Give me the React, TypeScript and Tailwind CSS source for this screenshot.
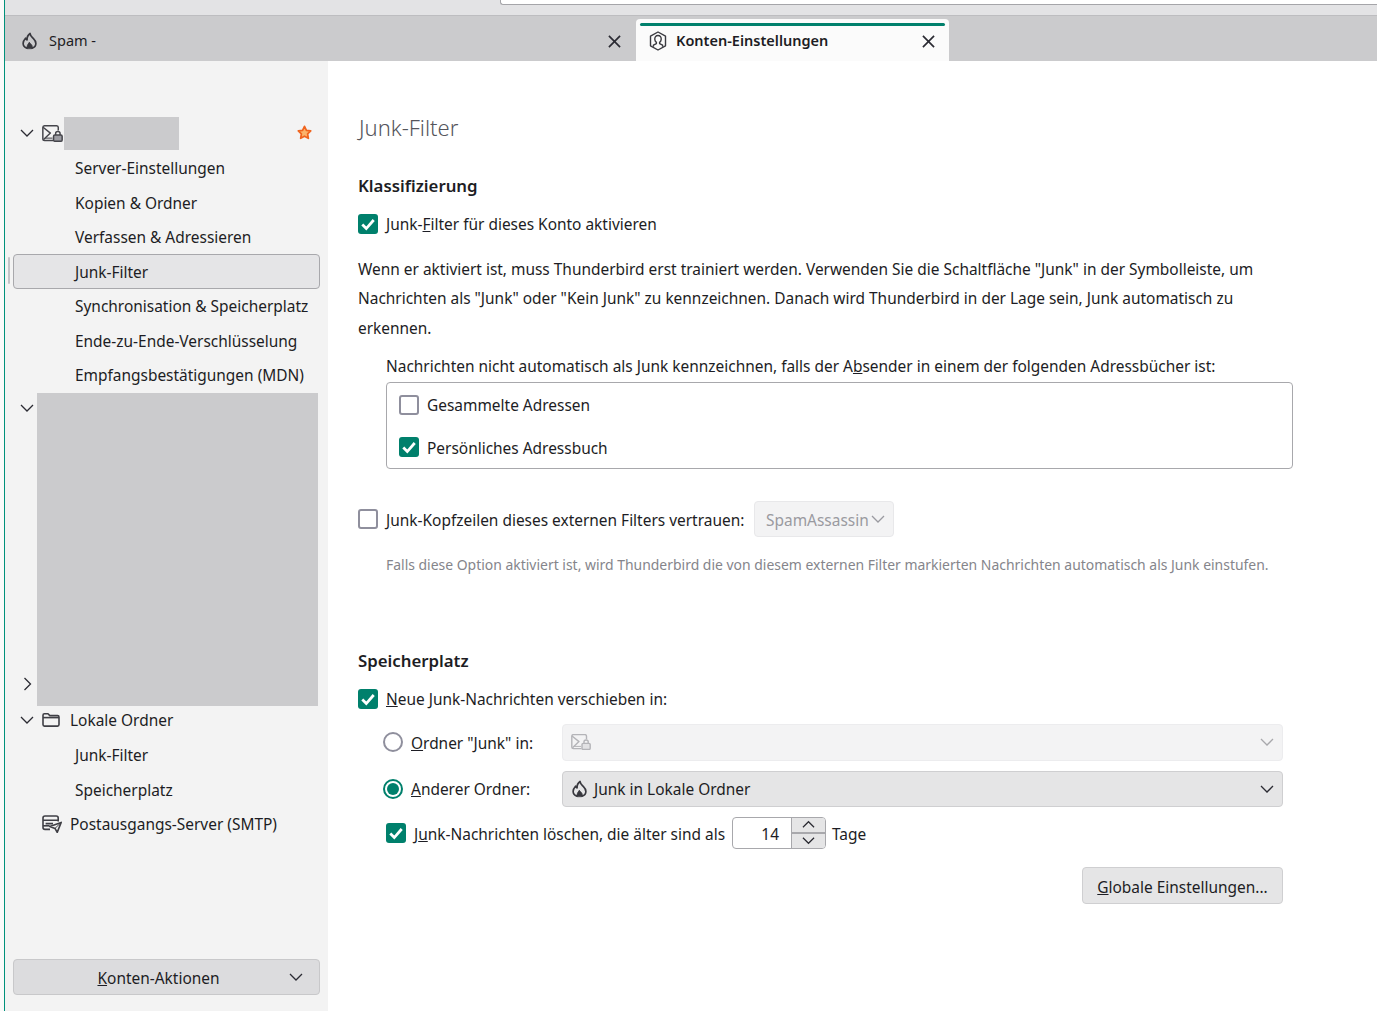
import React from "react";

const Chevron = ({ className = "", up = false, right = false }: { className?: string; up?: boolean; right?: boolean }) => (
  <svg viewBox="0 0 14 14" className={className} fill="none" stroke="currentColor" strokeWidth="1.3">
    {right ? <path d="M4.5 1 L10.5 7 L4.5 13" /> : up ? <path d="M1 10 L7 4 L13 10" /> : <path d="M1 4 L7 10 L13 4" />}
  </svg>
);

const Close = ({ className = "" }: { className?: string }) => (
  <svg viewBox="0 0 14 14" className={className} fill="none" stroke="#2b2b33" strokeWidth="1.8">
    <path d="M1 1 L13 13 M13 1 L1 13" />
  </svg>
);

const Flame = ({ className = "" }: { className?: string }) => (
  <svg viewBox="0 0 16 18" className={className} fill="none" stroke="#38383e" strokeWidth="1.8" strokeLinejoin="round" strokeLinecap="round">
    <path d="M5.2 16.6 C2.8 15.8 1.2 13.8 1.2 11.4 C1.2 9 2.6 7.4 3.8 6 C4.2 7 4.6 7.6 5.4 7.8 C5.2 5 6.4 2.6 8.6 1 C8.8 3.4 10.4 4.6 12 6.2 C13.8 8 14.8 9.6 14.8 11.6 C14.8 13.8 13.2 15.8 10.8 16.6" />
    <path d="M5.4 16.8 C4.8 14.4 6.4 12.6 7.8 10.4 C8.4 11.8 9.2 12 10 12.8 C11 14 11.2 15.6 10.6 16.8 Z" fill="#38383e" stroke="#38383e" strokeWidth="1" />
  </svg>
);

const Account = ({ className = "" }: { className?: string }) => (
  <svg viewBox="0 0 18 20" className={className} fill="none" stroke="#3a3a40" strokeWidth="1.4" strokeLinejoin="round">
    <path d="M9 1 L16.5 5.2 L16.5 14.8 L9 19 L1.5 14.8 L1.5 5.2 Z" />
    <path d="M9 4.5 C11.2 4.5 12.4 6.2 12.2 8.4 C12.1 9.8 11.4 10.8 10.6 11.4 L10.6 12.6 L13.6 14.2 L13.6 15.8 M9 4.5 C6.8 4.5 5.6 6.2 5.8 8.4 C5.9 9.8 6.6 10.8 7.4 11.4 L7.4 12.6 L4.4 14.2 L4.4 15.8" />
  </svg>
);

const MailLock = ({ className = "", dim = false }: { className?: string; dim?: boolean }) => {
  const ink = dim ? "#b4b4b8" : "#45454b";
  return (
    <svg viewBox="0 0 20 16" className={className} fill="none" stroke={ink} strokeWidth="1.4" strokeLinejoin="round">
      <path d="M10.5 14.6 L2.5 14.6 C1.4 14.6 0.8 13.9 0.8 12.9 L0.8 2.2 C0.8 1.2 1.4 0.6 2.5 0.6 L13.8 0.6 C14.9 0.6 15.5 1.2 15.5 2.2 L15.5 5.2" />
      <path d="M1 2 L8 7.6 L1.5 13.8" />
      <path d="M2.8 12.4 L10 12.4" strokeWidth="1" />
      <rect x="11" y="9.4" width="8.2" height="6" rx="1.2" fill={dim ? "#e2e2e4" : "#9c9ca2"} />
      <path d="M13 9.4 L13 7.8 C13 6.7 13.9 6 15.1 6 C16.3 6 17.2 6.7 17.2 7.8 L17.2 9.4" />
    </svg>
  );
};

const Folder = ({ className = "" }: { className?: string }) => (
  <svg viewBox="0 0 18 14" className={className} fill="none" stroke="#3f3f45" strokeWidth="1.6" strokeLinejoin="round">
    <path d="M1 2.2 C1 1.4 1.5 0.8 2.4 0.8 L6 0.8 L7.8 2.6 L15.6 2.6 C16.5 2.6 17 3.2 17 4 L17 11.6 C17 12.5 16.5 13.1 15.6 13.1 L2.4 13.1 C1.5 13.1 1 12.5 1 11.6 Z" />
    <path d="M1 4.6 L17 4.6" />
  </svg>
);

const Outbox = ({ className = "" }: { className?: string }) => (
  <svg viewBox="0 0 20 18" className={className} fill="none" stroke="#3f3f45" strokeWidth="1.6" strokeLinejoin="round">
    <path d="M8 14.4 L3 14.4 C1.7 14.4 1 13.6 1 12.6 L1 3 C1 1.8 1.8 1 3 1 L14.2 1 C15.4 1 16.2 1.8 16.2 3 L16.2 6.5" />
    <path d="M1 5.2 L16.2 5.2 M3.6 8.6 L11 8.6" />
    <path d="M1 10.8 L7.6 10.8" />
    <path d="M7.8 11.4 L19.2 7.4 L15.2 17.4 L13 13.4 Z" fill="#f3f3f3" />
    <path d="M13 13.4 L19.2 7.4" strokeWidth="1" />
  </svg>
);

const Check = ({ checked = false, className = "" }: { checked?: boolean; className?: string }) =>
  checked ? (
    <span className={`flex h-5 w-5 shrink-0 items-center justify-center rounded-[3px] bg-[#00806c] ${className}`}>
      <svg viewBox="0 0 14 14" className="h-4 w-4" fill="none" stroke="white" strokeWidth="2.4">
        <path d="M2 7.5 L5.5 11 L12 3.5" />
      </svg>
    </span>
  ) : (
    <span className={`block h-5 w-5 shrink-0 rounded-[3px] border-2 border-[#8f8f9d] bg-white ${className}`} />
  );

const Radio = ({ checked = false }: { checked?: boolean }) => (
  <span
    className={`flex h-5 w-5 shrink-0 items-center justify-center rounded-full border-2 bg-white ${
      checked ? "border-[#00806c]" : "border-[#8f8f9d]"
    }`}
  >
    {checked && <span className="block h-3 w-3 rounded-full bg-[#00806c]" />}
  </span>
);

const subItems = [
  "Server-Einstellungen",
  "Kopien & Ordner",
  "Verfassen & Adressieren",
  "Junk-Filter",
  "Synchronisation & Speicherplatz",
  "Ende-zu-Ende-Verschlüsselung",
  "Empfangsbestätigungen (MDN)",
];

const SubItem = ({ label, selected = false }: { label: string; selected?: boolean }) => (
  <div className="relative flex h-[34.5px] items-center">
    {selected && <span className="absolute left-[3px] top-[3px] h-[27px] w-[2px] rounded bg-[#c4c4c8]" />}
    <div
      className={`ml-2 mr-2 flex h-full flex-1 items-center rounded-[4px] border pl-[61px] pt-[2px] ${
        selected ? "border-[#a8a8ac] bg-[#e5e5e7]" : "border-transparent"
      }`}
    >
      {label}
    </div>
  </div>
);

const Sidebar = () => (
  <aside className="flex h-full w-[323px] shrink-0 flex-col bg-[#f3f3f3] pt-[55px] text-[#1d1d24]">
    <div className="flex h-[34.5px] items-center">
      <Chevron className="ml-[15px] h-[14px] w-[14px] text-[#2b2b33]" />
      <MailLock className="ml-[8px] mr-[1px] h-[17px] w-[21px]" />
      <div className="h-[33px] w-[115px] bg-[#cbcbcd]" />
      <svg viewBox="0 0 14 14" className="mb-[2px] ml-[118px] h-[15px] w-[15px]" fill="#fbb36b" stroke="#f0641e" strokeWidth="1.6" strokeLinejoin="round">
        <path d="M7 1.2 L8.8 5 L12.8 5.5 L9.9 8.3 L10.6 12.4 L7 10.4 L3.4 12.4 L4.1 8.3 L1.2 5.5 L5.2 5 Z" />
      </svg>
    </div>
    {subItems.map((s) => (
      <SubItem key={s} label={s} selected={s === "Junk-Filter"} />
    ))}
    <div className="mt-px flex h-[313px] shrink-0">
      <div className="flex w-[32px] flex-col justify-between pb-[15px] pt-[8px]">
        <Chevron className="ml-[15px] h-[14px] w-[14px] text-[#2b2b33]" />
        <Chevron right className="ml-[15px] h-[14px] w-[14px] text-[#2b2b33]" />
      </div>
      <div className="h-full w-[281px] bg-[#cbcbcd]" />
    </div>
    <div className="mb-[3.5px] flex h-[28px] items-center">
      <Chevron className="ml-[15px] h-[14px] w-[14px] text-[#2b2b33]" />
      <Folder className="ml-[8px] h-[14px] w-[18px]" />
      <span className="ml-[10px] pt-[2px]">Lokale Ordner</span>
    </div>
    <SubItem label="Junk-Filter" />
    <SubItem label="Speicherplatz" />
    <div className="flex h-[34.5px] items-center">
      <Outbox className="ml-[37px] h-[18px] w-[20px]" />
      <span className="ml-[8px] pt-[2px]">Postausgangs-Server (SMTP)</span>
    </div>
    <div className="mx-2 mb-4 mt-auto flex h-9 items-center rounded-[4px] border border-[#c8c8ca] bg-[#dcdcde]">
      <span className="flex-1 pl-[14px] pt-[3px] text-center">
        <u>K</u>onten-Aktionen
      </span>
      <Chevron className="mr-[16px] h-[14px] w-[14px] text-[#2b2b33]" />
    </div>
  </aside>
);

const Main = () => (
  <main className="h-full flex-1 bg-white pl-[30px] pr-[84px] pt-[50px] text-[#1d1d24]">
    <h1 className="ml-px h-8 text-[22px] font-light leading-8 text-[#55555c]">Junk-Filter</h1>
    <h2 className="mt-[31px] h-6 text-[16.8px] font-semibold leading-6">Klassifizierung</h2>
    <div className="mt-[14px] flex h-6 items-center gap-2">
      <Check checked />
      <span className="pt-[2px]">
        Junk-<u>F</u>ilter für dieses Konto aktivieren
      </span>
    </div>
    <p className="mt-[18px] pt-[0.5px] leading-[29.5px]">
      Wenn er aktiviert ist, muss Thunderbird erst trainiert werden. Verwenden Sie die Schaltfläche "Junk" in der Symbolleiste, um
      <br />
      Nachrichten als "Junk" oder "Kein Junk" zu kennzeichnen. Danach wird Thunderbird in der Lage sein, Junk automatisch zu
      <br />
      erkennen.
    </p>
    <div className="ml-[28px] mt-[10.5px] h-6 leading-6">
      Nachrichten nicht automatisch als Junk kennzeichnen, falls der A<u>b</u>sender in einem der folgenden Adressbücher ist:
    </div>
    <div className="ml-[28px] mt-1 flex h-[87px] flex-col rounded-[4px] border border-[#a8a8ac] pl-3 pt-[2px]">
      <div className="flex h-[41px] items-center gap-2">
        <Check />
        <span className="pt-[2px]">Gesammelte Adressen</span>
      </div>
      <div className="mt-[2px] flex h-[41px] items-center gap-2">
        <Check checked />
        <span className="pt-[2px]">Persönliches Adressbuch</span>
      </div>
    </div>
    <div className="mt-8 flex h-9 items-center gap-2">
      <Check />
      <span className="w-[358px] whitespace-nowrap pt-[5px]">
        <u>J</u>unk-Kopfzeilen dieses externen Filters vertrauen:
      </span>
      <div className="ml-[2px] flex h-9 w-[140px] items-center justify-between rounded-[4px] border border-[#e8e8ea] bg-[#f3f3f4] pl-[11px] pr-[8px] text-[#9a9aa0]">
        <span className="pt-[5px]">SpamAssassin</span>
        <Chevron className="h-[14px] w-[14px]" />
      </div>
    </div>
    <div className="ml-[28px] mt-[18px] h-5 text-[13.95px] leading-5 text-[#85858b]">
      Falls diese Option aktiviert ist, wird Thunderbird die von diesem externen Filter markierten Nachrichten automatisch als Junk einstufen.
    </div>
    <h2 className="mt-[74px] h-6 text-[16.8px] font-semibold leading-6">Speicherplatz</h2>
    <div className="mt-[14px] flex h-6 items-center gap-2">
      <Check checked />
      <span className="pt-[2px]">
        <u>N</u>eue Junk-Nachrichten verschieben in:
      </span>
    </div>
    <div className="mr-[10px]">
      <div className="ml-[25px] mt-[13px] flex h-[37px] items-center">
        <Radio />
        <span className="ml-2 w-[151px] pt-[3px]">
          <u>O</u>rdner "Junk" in:
        </span>
        <div className="flex h-full flex-1 items-center justify-between rounded-[4px] border border-[#ececee] bg-[#f3f3f4] pl-2 pr-[8px] text-[#a8a8ac]">
          <MailLock dim className="h-[16px] w-[20px]" />
          <Chevron className="h-[14px] w-[14px]" />
        </div>
      </div>
      <div className="ml-[25px] mt-[10px] flex h-9 items-center">
        <Radio checked />
        <span className="ml-2 w-[151px] pt-[2px]">
          <u>A</u>nderer Ordner:
        </span>
        <div className="flex h-full flex-1 items-center rounded-[4px] border border-[#cfcfd1] bg-[#e5e5e6] pl-[9px] pr-[8px]">
          <Flame className="h-[18px] w-[15px]" />
          <span className="ml-[7px] flex-1 pt-[3px]">Junk in Lokale Ordner</span>
          <Chevron className="h-[14px] w-[14px] text-[#2b2b33]" />
        </div>
      </div>
      <div className="ml-[28px] mt-[10px] flex h-8 items-center">
        <Check checked />
        <span className="ml-2 w-[313px] whitespace-nowrap pt-[5px]">
          J<u>u</u>nk-Nachrichten löschen, die älter sind als
        </span>
        <div className="ml-[5px] flex h-8 w-[94px] overflow-hidden rounded-[4px] border border-[#a8a8ac]">
          <span className="flex-1 pr-3 text-right leading-[32px]">14</span>
          <div className="flex w-[34px] flex-col border-l border-[#a8a8ac] bg-[#e5e5e6]">
            <div className="flex flex-1 items-center justify-center border-b-2 border-[#a8a8ac]">
              <Chevron up className="h-[13px] w-[13px] text-[#2b2b33]" />
            </div>
            <div className="flex flex-1 items-center justify-center">
              <Chevron className="h-[13px] w-[13px] text-[#2b2b33]" />
            </div>
          </div>
        </div>
        <span className="ml-[6px] pt-[5px]">Tage</span>
      </div>
      <div className="mt-[18px] flex justify-end">
        <div className="flex h-[37px] w-[201px] items-center justify-center rounded-[4px] border border-[#cfcfd1] bg-[#e5e5e6]">
          <span className="pt-[5px]">
            <u>G</u>lobale Einstellungen...
          </span>
        </div>
      </div>
    </div>
  </main>
);

export default function App() {
  return (
    <div className="flex h-[1011px] w-full overflow-hidden bg-white font-['Noto_Sans',sans-serif] text-[15.45px]">
      <div className="w-[4px] shrink-0 bg-[#fafafa]" />
      <div className="w-px shrink-0 bg-[#00917b]" />
      <div className="flex min-w-0 flex-1 flex-col">
        <div className="h-[16px] shrink-0 border-b border-[#bdbdc0] bg-[#e3e3e5] pl-[495px]">
          <div className="h-[5px] rounded-bl-[3px] border-b border-l border-[#a5a5a9] bg-white" />
        </div>
        <div className="flex h-[45px] shrink-0 bg-[#cbcbcd] text-[#1d1d24]">
          <div className="flex w-[631px] items-center pt-[5px]">
            <Flame className="ml-[17px] h-[18px] w-[15px]" />
            <span className="ml-[12px] flex-1 text-[14.5px]">Spam -</span>
            <Close className="mr-[15px] h-[13px] w-[13px]" />
          </div>
          <div className="mt-[3px] flex h-[42px] w-[313px] flex-col rounded-t-[4px] bg-[#fbfbfb] px-1 pt-1">
            <div className="h-[3px] rounded-sm bg-[#00806c]" />
            <div className="flex flex-1 items-center pb-[5px]">
              <Account className="ml-[9px] h-[20px] w-[18px]" />
              <span className="ml-[9px] flex-1 text-[14.5px] font-semibold">Konten-Einstellungen</span>
              <Close className="mr-[10px] h-[13px] w-[13px]" />
            </div>
          </div>
        </div>
        <div className="flex min-h-0 flex-1">
          <Sidebar />
          <Main />
        </div>
      </div>
    </div>
  );
}
